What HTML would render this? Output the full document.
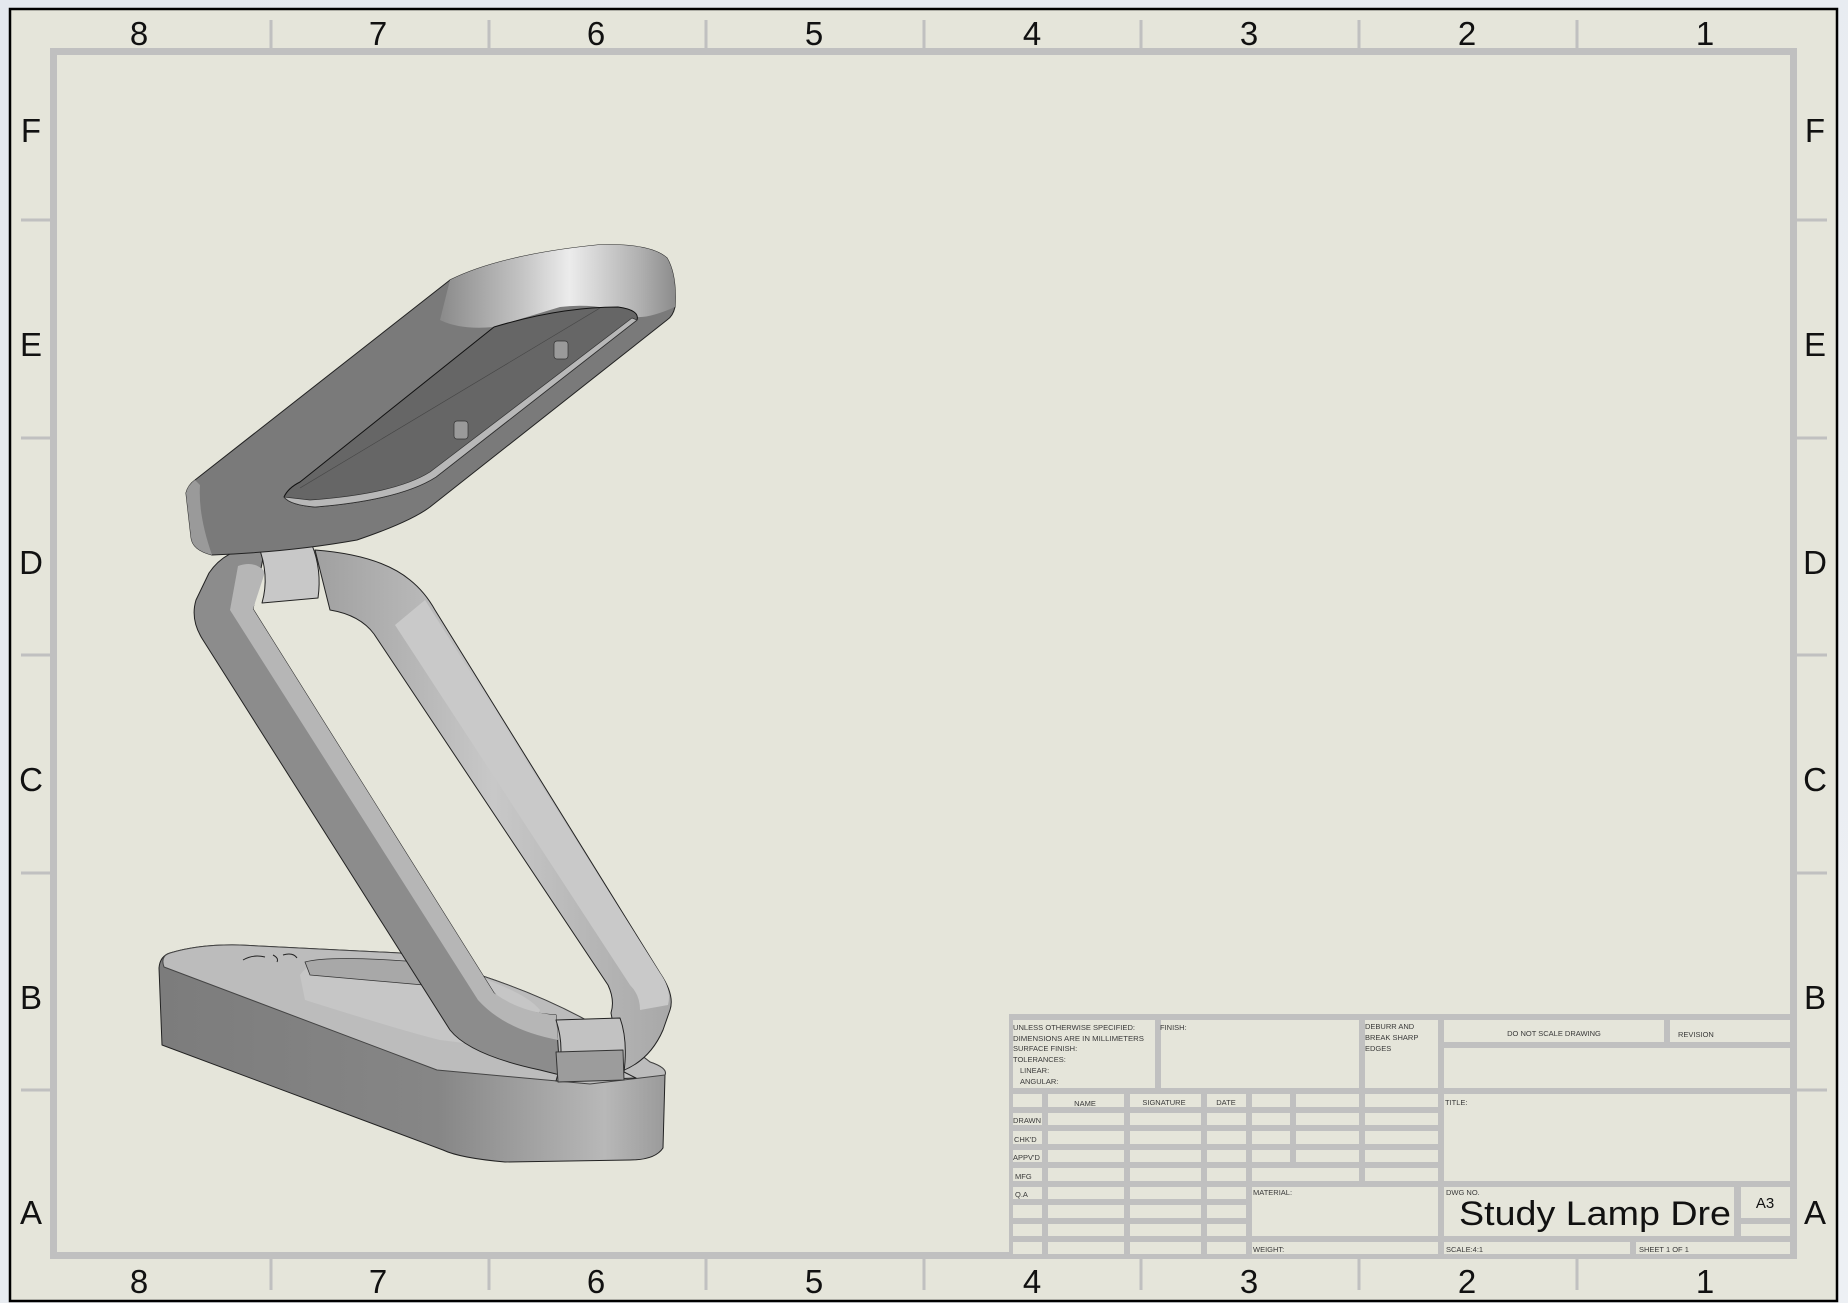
<!DOCTYPE html>
<html><head><meta charset="utf-8"><style>
html,body{margin:0;padding:0;width:1848px;height:1303px;overflow:hidden;background:#e9edf2;}
svg{display:block}
text{font-family:"Liberation Sans",sans-serif;}
</style></head><body>
<svg width="1848" height="1303" viewBox="0 0 1848 1303" xmlns="http://www.w3.org/2000/svg">
<defs>
<linearGradient id="bg" x1="0" y1="0" x2="1" y2="1"><stop offset="0" stop-color="#e4e8ee"/><stop offset="1" stop-color="#edf0f4"/></linearGradient>
<linearGradient id="band" x1="0" y1="0" x2="1" y2="0"><stop offset="0" stop-color="#8a8a8a"/><stop offset="0.35" stop-color="#c4c4c4"/><stop offset="0.55" stop-color="#ececec"/><stop offset="0.85" stop-color="#b0b0b0"/><stop offset="1" stop-color="#8c8c8c"/></linearGradient>
<linearGradient id="baseSide" x1="0" y1="0" x2="1" y2="0"><stop offset="0" stop-color="#7c7c7c"/><stop offset="0.55" stop-color="#868686"/><stop offset="0.75" stop-color="#a4a4a4"/><stop offset="0.88" stop-color="#b8b8b8"/><stop offset="1" stop-color="#9a9a9a"/></linearGradient>
<linearGradient id="barR" x1="0" y1="0" x2="1" y2="0"><stop offset="0" stop-color="#a0a0a0"/><stop offset="0.5" stop-color="#c8c8c8"/><stop offset="1" stop-color="#a8a8a8"/></linearGradient>
</defs>
<rect width="1848" height="1303" fill="url(#bg)"/>
<rect x="10" y="9" width="1827" height="1292" fill="#e5e5da" stroke="#000" stroke-width="2.5"/>
<!-- inner frame -->
<rect x="53.5" y="51.5" width="1740" height="1204" fill="none" stroke="#c0c0c0" stroke-width="7"/>
<g stroke="#c0c0c0" stroke-width="3">
<line x1="271" y1="20" x2="271" y2="50"/><line x1="489" y1="20" x2="489" y2="50"/><line x1="706" y1="20" x2="706" y2="50"/><line x1="924" y1="20" x2="924" y2="50"/><line x1="1141" y1="20" x2="1141" y2="50"/><line x1="1359" y1="20" x2="1359" y2="50"/><line x1="1577" y1="20" x2="1577" y2="50"/>
<line x1="271" y1="1258" x2="271" y2="1290"/><line x1="489" y1="1258" x2="489" y2="1290"/><line x1="706" y1="1258" x2="706" y2="1290"/><line x1="924" y1="1258" x2="924" y2="1290"/><line x1="1141" y1="1258" x2="1141" y2="1290"/><line x1="1359" y1="1258" x2="1359" y2="1290"/><line x1="1577" y1="1258" x2="1577" y2="1290"/>
<line x1="21" y1="220" x2="52" y2="220"/><line x1="21" y1="438" x2="52" y2="438"/><line x1="21" y1="655" x2="52" y2="655"/><line x1="21" y1="873" x2="52" y2="873"/><line x1="21" y1="1090" x2="52" y2="1090"/>
<line x1="1797" y1="220" x2="1827" y2="220"/><line x1="1797" y1="438" x2="1827" y2="438"/><line x1="1797" y1="655" x2="1827" y2="655"/><line x1="1797" y1="873" x2="1827" y2="873"/><line x1="1797" y1="1090" x2="1827" y2="1090"/>
</g>
<g font-size="33" fill="#111" text-anchor="middle">
<text x="139" y="45">8</text><text x="378" y="45">7</text><text x="596" y="45">6</text><text x="814" y="45">5</text><text x="1032" y="45">4</text><text x="1249" y="45">3</text><text x="1467" y="45">2</text><text x="1705" y="45">1</text>
<text x="139" y="1293">8</text><text x="378" y="1293">7</text><text x="596" y="1293">6</text><text x="814" y="1293">5</text><text x="1032" y="1293">4</text><text x="1249" y="1293">3</text><text x="1467" y="1293">2</text><text x="1705" y="1293">1</text>
<text x="31" y="142">F</text><text x="31" y="356">E</text><text x="31" y="574">D</text><text x="31" y="791">C</text><text x="31" y="1009">B</text><text x="31" y="1224">A</text>
<text x="1815" y="142">F</text><text x="1815" y="356">E</text><text x="1815" y="574">D</text><text x="1815" y="791">C</text><text x="1815" y="1009">B</text><text x="1815" y="1224">A</text>
</g>

<!-- title block -->
<rect x="1009" y="1014" width="786" height="244" fill="#c0c0c0"/>
<g fill="#e5e5da">
<rect x="1013" y="1020" width="142" height="68"/>
<rect x="1161" y="1020" width="198" height="68"/>
<rect x="1365" y="1020" width="73" height="68"/>
<rect x="1444" y="1020" width="220" height="22"/>
<rect x="1670" y="1020" width="120" height="22"/>
<rect x="1444" y="1048" width="346" height="40"/>
<rect x="1444" y="1094" width="346" height="87"/>
<rect x="1444" y="1187" width="290" height="49"/>
<rect x="1741" y="1187" width="49" height="31"/>
<rect x="1741" y="1224" width="49" height="12"/>
<rect x="1444" y="1242" width="186" height="12"/>
<rect x="1636" y="1242" width="154" height="12"/>
<rect x="1252" y="1187" width="186" height="49"/>
<rect x="1252" y="1242" width="186" height="12"/>
<rect x="1252" y="1168" width="107" height="13"/>
<rect x="1365" y="1168" width="73" height="13"/>
</g>
<g fill="#e5e5da" id="r1">
<rect x="1013" y="1094" width="29" height="13"/><rect x="1048" y="1094" width="76" height="13"/><rect x="1130" y="1094" width="71" height="13"/><rect x="1207" y="1094" width="39" height="13"/><rect x="1252" y="1094" width="38" height="13"/><rect x="1296" y="1094" width="63" height="13"/><rect x="1365" y="1094" width="73" height="13"/>
<rect x="1013" y="1113" width="29" height="12"/><rect x="1048" y="1113" width="76" height="12"/><rect x="1130" y="1113" width="71" height="12"/><rect x="1207" y="1113" width="39" height="12"/><rect x="1252" y="1113" width="38" height="12"/><rect x="1296" y="1113" width="63" height="12"/><rect x="1365" y="1113" width="73" height="12"/>
<rect x="1013" y="1131" width="29" height="13"/><rect x="1048" y="1131" width="76" height="13"/><rect x="1130" y="1131" width="71" height="13"/><rect x="1207" y="1131" width="39" height="13"/><rect x="1252" y="1131" width="38" height="13"/><rect x="1296" y="1131" width="63" height="13"/><rect x="1365" y="1131" width="73" height="13"/>
<rect x="1013" y="1150" width="29" height="12"/><rect x="1048" y="1150" width="76" height="12"/><rect x="1130" y="1150" width="71" height="12"/><rect x="1207" y="1150" width="39" height="12"/><rect x="1252" y="1150" width="38" height="12"/><rect x="1296" y="1150" width="63" height="12"/><rect x="1365" y="1150" width="73" height="12"/>
<rect x="1013" y="1168" width="29" height="13"/><rect x="1048" y="1168" width="76" height="13"/><rect x="1130" y="1168" width="71" height="13"/><rect x="1207" y="1168" width="39" height="13"/>
<rect x="1013" y="1187" width="29" height="12"/><rect x="1048" y="1187" width="76" height="12"/><rect x="1130" y="1187" width="71" height="12"/><rect x="1207" y="1187" width="39" height="12"/>
<rect x="1013" y="1205" width="29" height="13"/><rect x="1048" y="1205" width="76" height="13"/><rect x="1130" y="1205" width="71" height="13"/><rect x="1207" y="1205" width="39" height="13"/>
<rect x="1013" y="1224" width="29" height="12"/><rect x="1048" y="1224" width="76" height="12"/><rect x="1130" y="1224" width="71" height="12"/><rect x="1207" y="1224" width="39" height="12"/>
<rect x="1013" y="1242" width="29" height="12"/><rect x="1048" y="1242" width="76" height="12"/><rect x="1130" y="1242" width="71" height="12"/><rect x="1207" y="1242" width="39" height="12"/>
</g>
<g font-size="7.5" fill="#3a3a3a">
<text x="1013" y="1030" textLength="122" lengthAdjust="spacingAndGlyphs">UNLESS OTHERWISE SPECIFIED:</text>
<text x="1013" y="1041" textLength="131" lengthAdjust="spacingAndGlyphs">DIMENSIONS ARE IN MILLIMETERS</text>
<text x="1013" y="1051">SURFACE FINISH:</text>
<text x="1013" y="1062">TOLERANCES:</text>
<text x="1020" y="1073">LINEAR:</text>
<text x="1020" y="1084">ANGULAR:</text>
<text x="1160" y="1030">FINISH:</text>
<text x="1365" y="1029">DEBURR AND</text>
<text x="1365" y="1040">BREAK SHARP</text>
<text x="1365" y="1051">EDGES</text>
<text x="1554" y="1036" text-anchor="middle">DO NOT SCALE DRAWING</text>
<text x="1678" y="1037">REVISION</text>
<text x="1085" y="1106" text-anchor="middle">NAME</text>
<text x="1164" y="1105" text-anchor="middle">SIGNATURE</text>
<text x="1226" y="1105" text-anchor="middle">DATE</text>
<text x="1013" y="1123">DRAWN</text>
<text x="1014" y="1142">CHK'D</text>
<text x="1013" y="1160">APPV'D</text>
<text x="1015" y="1179">MFG</text>
<text x="1015" y="1197">Q.A</text>
<text x="1445" y="1105">TITLE:</text>
<text x="1253" y="1195">MATERIAL:</text>
<text x="1253" y="1252">WEIGHT:</text>
<text x="1446" y="1195">DWG NO.</text>
<text x="1446" y="1252">SCALE:4:1</text>
<text x="1639" y="1252">SHEET 1 OF 1</text>
</g>
<text x="1765" y="1208" font-size="15" fill="#111" text-anchor="middle">A3</text>
<text x="1459" y="1225" font-size="34" fill="#111" textLength="272" lengthAdjust="spacingAndGlyphs">Study Lamp Dre</text>

<!-- LAMP -->
<g stroke="#222" stroke-width="1" stroke-linejoin="round">
<!-- base -->
<path d="M170,953 Q200,944 240,945 L400,953 Q560,990 650,1062 Q668,1068 665,1075 L663,1148 Q655,1160 630,1160 L505,1162 Q460,1158 443,1150 L162,1045 L159,968 Q160,956 170,953 Z" fill="url(#baseSide)"/>
<path d="M170,953 Q200,944 240,945 L400,953 Q560,990 650,1062 Q668,1068 665,1075 L590,1084 L437,1070 L164,967 Q160,956 170,953 Z" fill="#bcbcbc" stroke="#444"/>
<path d="M300,975 Q310,960 340,958 L420,960 Q520,985 540,1010 L520,1050 L440,1040 Q400,1030 305,1000 Z" fill="#c6c6c6" stroke="none"/>
<path d="M305,962 Q330,955 420,962 Q470,975 480,990 L310,975 Z" fill="#a8a8a8" stroke="#333" stroke-width="0.8"/>
<path d="M243,960 q10,-6 22,-3 M273,955 q6,3 4,7 M283,955 q10,-3 14,3" fill="none" stroke="#222"/>
<!-- arm left bar -->
<path d="M209,573 Q228,545 265,548 L253,609 L494,993 Q510,1012 556,1015 L560,1075 L540,1070 Q470,1055 450,1030 L203,640 Q190,620 196,600 Z" fill="#8c8c8c"/>
<path d="M238,566 Q255,560 265,572 L253,609 L494,993 Q520,1012 556,1015 L558,1040 Q505,1030 478,1000 L230,610 Z" fill="#b6b6b6" stroke="none"/>
<!-- arm right bar -->
<path d="M315,550 Q380,555 410,580 Q425,592 435,610 L660,973 Q675,995 670,1010 L663,1030 Q650,1060 622,1071 L611,1013 Q615,1000 608,985 L374,634 Q360,615 330,610 Z" fill="url(#barR)"/>
<path d="M425,600 L660,973 Q672,990 668,1005 L640,1010 Q640,995 630,985 L395,625 Z" fill="#c9c9c9" stroke="none"/>
<!-- top hinge -->
<path d="M258,545 L312,545 Q322,570 318,598 L262,603 Q270,575 258,545 Z" fill="#c8c8c8"/>
<!-- bottom hinge -->
<path d="M556,1020 L620,1018 Q628,1040 624,1072 L636,1078 L556,1081 Q566,1050 556,1020 Z" fill="#c2c2c2"/>
<path d="M556,1052 L623,1050 L624,1080 L558,1082 Z" fill="#9c9c9c" stroke="#333"/>
<!-- head -->
<path d="M450,280 Q500,255 598,245 Q650,243 667,258 Q677,275 675,307 Q673,316 667,320 L430,507 Q410,522 357,540 Q290,552 212,555 Q192,550 191,537 L186,493 Q188,485 195,480 Z" fill="#7a7a7a"/>
<path d="M450,280 Q500,255 598,245 Q650,243 667,258 Q677,275 675,307 Q650,318 637,317 Q600,302 560,307 L494,327 Q460,330 440,320 Z" fill="url(#band)" stroke="none"/>
<path d="M186,493 Q188,485 195,480 L200,485 Q198,515 212,555 Q192,550 191,537 Z" fill="#9a9a9a" stroke="none"/>
<path d="M494,327 Q560,307 618,307 Q640,310 637,320 L436,477 Q400,500 315,507 Q290,505 284,497 Q288,488 300,482 Z" fill="#666" stroke="#111"/>
<path d="M284,497 Q290,505 315,507 Q400,500 436,477 L637,320 L632,318 L430,472 Q395,494 310,500 Z" fill="#b8b8b8" stroke="#333" stroke-width="0.7"/>
<path d="M300,488 L600,308" fill="none" stroke="#444" stroke-width="0.6"/>
<rect x="454" y="421" width="14" height="18" rx="3" fill="#9a9a9a" stroke="#333" stroke-width="0.7"/>
<rect x="554" y="341" width="14" height="18" rx="3" fill="#9a9a9a" stroke="#333" stroke-width="0.7"/>
</g>
</svg>
</body></html>
